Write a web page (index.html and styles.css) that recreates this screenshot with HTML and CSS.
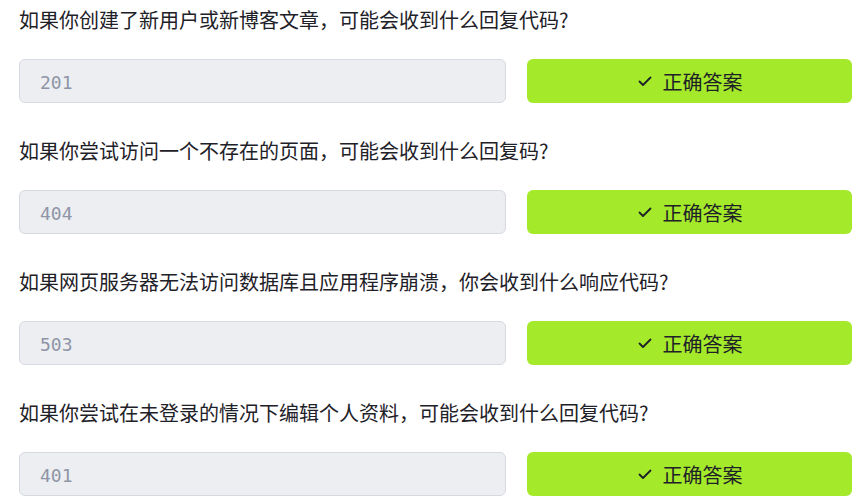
FILE: index.html
```html
<!DOCTYPE html>
<html lang="zh-CN">
<head>
<meta charset="utf-8">
<link rel="stylesheet" href="styles.css">
</head>
<body>
<div class="quiz">
  <div class="item">
    <p class="question">如果你创建了新用户或新博客文章，可能会收到什么回复代码?</p>
    <div class="row">
      <div class="answer">201</div>
      <button class="btn"><svg class="check" viewBox="0 0 16 16" width="16" height="16"><path d="M2.5 8.5l3.5 3.5 7.5-7.5" fill="none" stroke="currentColor" stroke-width="1.8" stroke-linecap="round" stroke-linejoin="round"/></svg><span>正确答案</span></button>
    </div>
  </div>
  <div class="item">
    <p class="question">如果你尝试访问一个不存在的页面，可能会收到什么回复码?</p>
    <div class="row">
      <div class="answer">404</div>
      <button class="btn"><svg class="check" viewBox="0 0 16 16" width="16" height="16"><path d="M2.5 8.5l3.5 3.5 7.5-7.5" fill="none" stroke="currentColor" stroke-width="1.8" stroke-linecap="round" stroke-linejoin="round"/></svg><span>正确答案</span></button>
    </div>
  </div>
  <div class="item">
    <p class="question">如果网页服务器无法访问数据库且应用程序崩溃，你会收到什么响应代码?</p>
    <div class="row">
      <div class="answer">503</div>
      <button class="btn"><svg class="check" viewBox="0 0 16 16" width="16" height="16"><path d="M2.5 8.5l3.5 3.5 7.5-7.5" fill="none" stroke="currentColor" stroke-width="1.8" stroke-linecap="round" stroke-linejoin="round"/></svg><span>正确答案</span></button>
    </div>
  </div>
  <div class="item">
    <p class="question">如果你尝试在未登录的情况下编辑个人资料，可能会收到什么回复代码?</p>
    <div class="row">
      <div class="answer">401</div>
      <button class="btn"><svg class="check" viewBox="0 0 16 16" width="16" height="16"><path d="M2.5 8.5l3.5 3.5 7.5-7.5" fill="none" stroke="currentColor" stroke-width="1.8" stroke-linecap="round" stroke-linejoin="round"/></svg><span>正确答案</span></button>
    </div>
  </div>
</div>
</body>
</html>
```
FILE: styles.css
```css
html, body {
  margin: 0;
  padding: 0;
  background: #ffffff;
}
body {
  font-family: "Noto Sans CJK SC", "Noto Sans", sans-serif;
  color: #1e2128;
}
.quiz {
  padding: 6px 15px 0 19px;
  display: flex;
  flex-direction: column;
  gap: 34px;
}
.item {
  display: flex;
  flex-direction: column;
  gap: 25px;
}
.question {
  margin: 0;
  font-size: 20px;
  line-height: 28px;
}
.row {
  display: grid;
  grid-template-columns: 3fr 2fr;
  gap: 21px;
}
.answer {
  box-sizing: border-box;
  height: 44px;
  display: flex;
  align-items: center;
  padding: 2px 20px 0;
  background: #eceef2;
  border: 1px solid #d6d9df;
  border-radius: 6px;
  font-family: "DejaVu Sans Mono", monospace;
  font-size: 18px;
  color: #8e95a6;
}
.btn {
  box-sizing: border-box;
  height: 44px;
  display: flex;
  align-items: center;
  justify-content: center;
  gap: 10px;
  background: #a4ea2a;
  border: none;
  border-radius: 6px;
  font-family: "Noto Sans CJK SC", "Noto Sans", sans-serif;
  font-size: 20px;
  color: #1e2128;
  padding: 0;
}
.check {
  width: 16px;
  height: 16px;
}
```
